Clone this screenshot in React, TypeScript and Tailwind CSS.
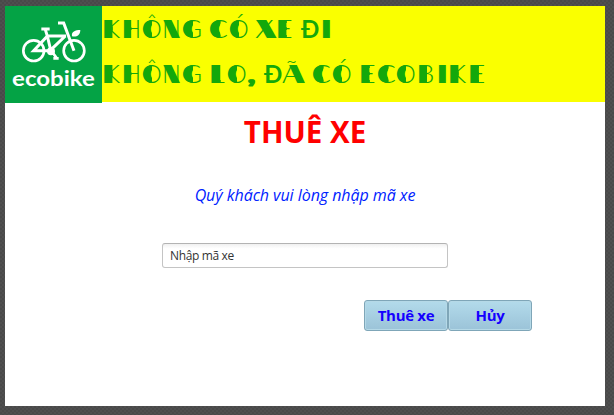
import React from "react";

type Stroke = "stem" | "bowl" | "diagonal" | "rightDiagonal" | "full" | "plain";
type Glyph = [char: string, width: number, stroke: Stroke, stretch?: number];

const khong: Glyph[] = [
  ["K", 20, "stem", 1.15],
  ["H", 20, "stem", 1.02],
  ["Ô", 20, "bowl", 1],
  ["N", 20, "diagonal", 1],
  ["G", 20, "bowl", 1.1],
];
const co: Glyph[] = [
  ["C", 20, "bowl", 1.12],
  ["Ó", 20, "bowl", 1],
];

const lines: { gap: number; glyphs: Glyph[] }[][] = [
  [
    { gap: 0, glyphs: khong },
    { gap: 7, glyphs: co },
    { gap: 6, glyphs: [["X", 21, "diagonal", 1.2], ["E", 19, "stem", 1.15]] },
    { gap: 6, glyphs: [["Đ", 20, "plain", 0.95], ["I", 10, "full", 1]] },
  ],
  [
    { gap: 0, glyphs: khong },
    { gap: 7, glyphs: [["L", 18, "stem", 1.25], ["O", 20, "bowl", 1], [",", 9, "full", 1]] },
    { gap: 8, glyphs: [["Đ", 18, "plain", 0.95], ["Ã", 23, "rightDiagonal", 1.15]] },
    { gap: 7, glyphs: co },
    {
      gap: 7,
      glyphs: [
        ["E", 18, "stem", 1.15],
        ["C", 19, "bowl", 1.12],
        ["O", 21, "bowl", 1],
        ["B", 20, "stem", 1.1],
        ["I", 11, "full", 1],
        ["K", 20, "stem", 1.15],
        ["E", 18, "stem", 1.2],
      ],
    },
  ],
];

const heavy =
  "before:absolute before:top-0 before:left-0 before:font-black before:content-[attr(data-base)] before:[text-shadow:1px_0,2px_0,3px_0,4px_0]";

const strokes: Record<Stroke, string> = {
  stem: `${heavy} before:[clip-path:inset(0_calc(100%_-_9px)_0_0)]`,
  bowl: `${heavy} before:[clip-path:inset(0_calc(100%_-_10px)_0_0)]`,
  diagonal: `${heavy} before:origin-left before:scale-x-[1.2] before:[clip-path:inset(14px_-9px_13px_0)]`,
  rightDiagonal: `${heavy} before:ml-[5px] before:[clip-path:inset(14px_-9px_13px_0)]`,
  full: "font-black [text-shadow:1px_0,2px_0,3px_0]",
  plain: "font-bold",
};

// The heavy stroke is a backslash for diagonals, else the unaccented letter, so the marks above stay thin.
const heavyGlyph = (c: string, stroke: Stroke) =>
  stroke === "diagonal" || stroke === "rightDiagonal" ? "\\" : c.normalize("NFD").charAt(0);

function Logo() {
  return (
    <div className="flex h-[97px] w-[97px] shrink-0 flex-col items-center bg-[#04a345] pt-[14px]">
      <svg className="h-[44px] w-[68px] shrink-0" viewBox="60 60 204 132" fill="none" stroke="#fff" strokeWidth="8">
        <circle cx="101" cy="152" r="31" />
        <circle cx="222" cy="152" r="31" />
        <path d="M124 87H149M136 89L142 108L101 152H150L196 108M142 108H198M142 108L152 150M174 69H191L222 152" strokeWidth="9" />
        <path d="M152 150L169 173M160 175H176" />
        <circle cx="153" cy="154" r="8" fill="#fff" />
        <path d="M216 109C213 95 226 90 241 90C241 106 229 112 216 109Z" fill="#fff" stroke="none" />
      </svg>
      <span className="mt-[2px] origin-center scale-x-[1.2] font-['Lato',sans-serif] text-[20px] leading-[24px] font-bold text-white">
        ecobike
      </span>
    </div>
  );
}

function Banner() {
  return (
    <header className="flex h-[97px] items-start">
      <Logo />
      <div className="flex h-24 flex-1 flex-col bg-[#faff00] pl-px font-['Lato',sans-serif] text-[25px] leading-[45px] font-light text-[#14a80b]">
        {lines.map((words, i) => (
          <div key={i} className="flex h-[45px] whitespace-nowrap">
            {words.map((word, j) => (
              <span key={j} className="flex" style={{ marginLeft: word.gap }}>
                {word.glyphs.map(([char, width, stroke, stretch = 1], k) => (
                  <span key={k} className="block" style={{ width }}>
                    <span
                      data-base={heavyGlyph(char, stroke)}
                      className={`relative -ml-px inline-block origin-left ${strokes[stroke]}`}
                      style={{ transform: `scaleX(${stretch})` }}
                    >
                      {char}
                    </span>
                  </span>
                ))}
              </span>
            ))}
          </div>
        ))}
      </div>
    </header>
  );
}

const buttonStyle =
  "h-[31px] w-[84px] rounded-[3px] border border-[#7fa6b8] bg-linear-to-b from-[#b3dbeb] to-[#9bc3d8] text-center text-[15px] font-bold tracking-[-0.3px] leading-[29px] text-[#1400ff] shadow-[inset_0_0_0_1px_#b5d9e7]";

export default function App() {
  return (
    <div className="h-[415px] w-[614px] bg-[#4b4b4b] bg-[repeating-conic-gradient(#4f4f4f_0_25%,#494949_0_50%)] bg-size-[4px_4px] pt-[6px] pl-[5px] font-['Open_Sans',sans-serif]">
      <main className="flex h-[400px] w-[600px] flex-col bg-white">
        <Banner />
        <h1 className="mt-[9px] text-center text-[29.5px] leading-[40px] font-bold text-[#ff0000]">THUÊ XE</h1>
        <p className="mt-[31px] text-center text-[16px] leading-[24px] tracking-[-0.05px] text-[#0022ff] italic">Quý khách vui lòng nhập mã xe</p>
        <input
          className="mt-[36px] ml-[157px] h-[25px] w-[286px] rounded-[3px] border border-[#c4c4c4] border-t-[#b3b3b3] bg-linear-to-b from-[#f0f0f0] to-white to-20% px-[7px] text-[12px] tracking-[-0.35px] text-[#333]"
          defaultValue="Nhập mã xe"
        />
        <div className="mt-[32px] ml-[359px] flex">
          <button className={buttonStyle}>Thuê xe</button>
          <button className={buttonStyle}>Hủy</button>
        </div>
      </main>
    </div>
  );
}
